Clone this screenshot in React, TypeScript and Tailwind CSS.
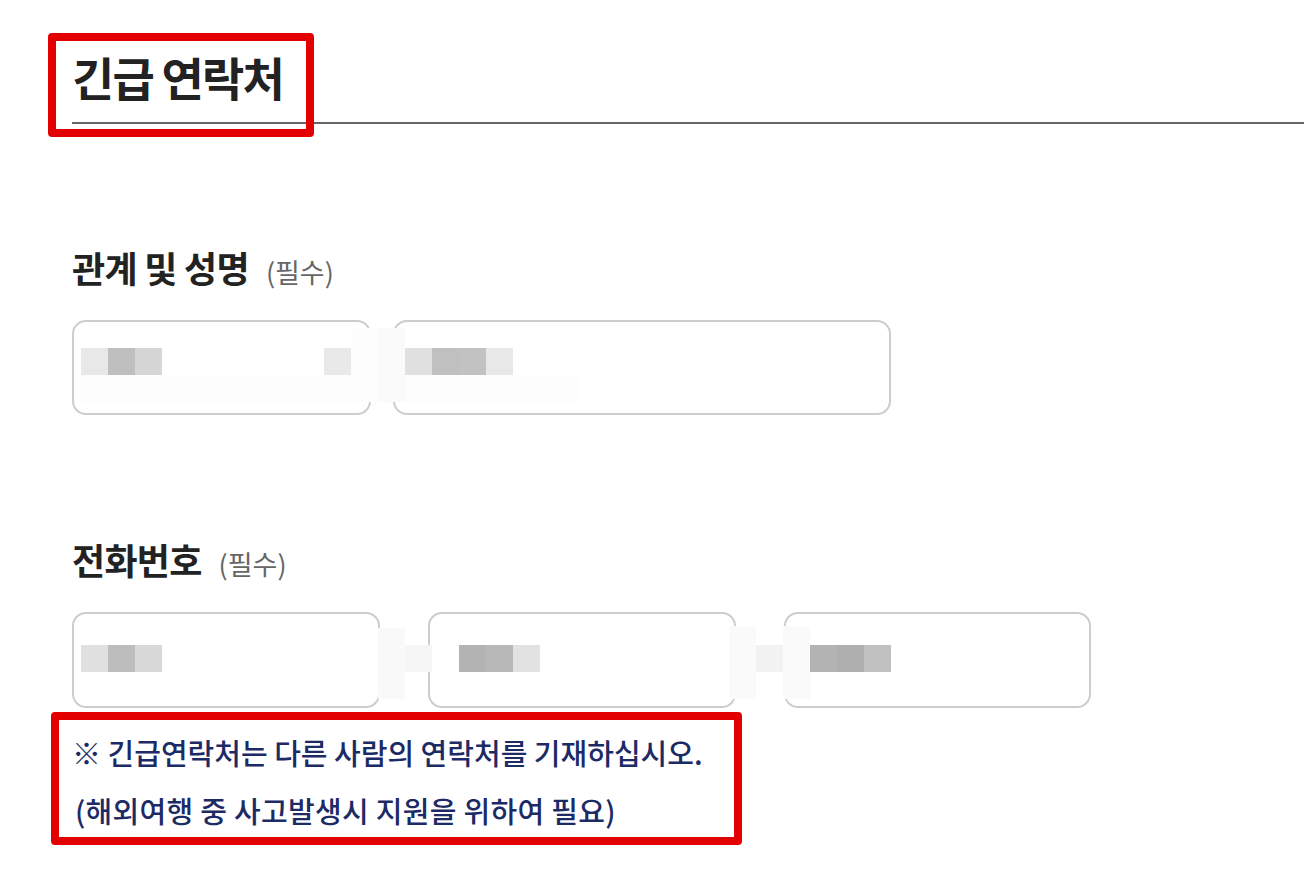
import React from "react";

type Cell = { x: number; y: number; w?: number; h?: number; c: string };

const cells: Cell[] = [
  // row 1 (relation / name)
  { x: 81, y: 375, w: 270, c: "#fdfdfd" },
  { x: 405, y: 375, w: 175, c: "#fdfdfd" },
  { x: 351, y: 328, h: 74, c: "#fdfdfd" },
  { x: 378, y: 328, h: 74, c: "#fafafa" },
  { x: 81, y: 348, c: "#e8e8e8" },
  { x: 108, y: 348, c: "#bfbfbf" },
  { x: 135, y: 348, c: "#d6d6d6" },
  { x: 324, y: 348, c: "#e9e9e9" },
  { x: 405, y: 348, c: "#e0e0e0" },
  { x: 432, y: 348, c: "#c0c0c0" },
  { x: 459, y: 348, c: "#c2c2c2" },
  { x: 486, y: 348, c: "#e8e8e8" },
  // row 2 (phone)
  { x: 81, y: 645, c: "#e0e0e0" },
  { x: 108, y: 645, c: "#bdbdbd" },
  { x: 135, y: 645, c: "#d8d8d8" },
  { x: 378, y: 628, h: 71, c: "#f9f9f9" },
  { x: 405, y: 645, c: "#f6f6f6" },
  { x: 459, y: 645, c: "#b3b3b3" },
  { x: 486, y: 645, c: "#b8b8b8" },
  { x: 513, y: 645, c: "#e2e2e2" },
  { x: 729, y: 626, h: 73, c: "#fafafa" },
  { x: 756, y: 645, c: "#f2f2f2" },
  { x: 783, y: 626, h: 73, c: "#fafafa" },
  { x: 810, y: 645, c: "#b3b3b3" },
  { x: 837, y: 645, c: "#afafaf" },
  { x: 864, y: 645, c: "#c0c0c0" },
];

export default function App() {
  return (
    <div className="relative h-[888px] w-[1304px] overflow-hidden bg-white font-['Noto_Sans_CJK_KR','Noto_Sans',sans-serif] text-[#222]">
      <div className="flex flex-col pl-[72px] pt-[50px]">
        <h2 className="border-b-2 border-[#666] pb-[20px] text-[46px] font-bold leading-[52px] tracking-[-0.04em]">
          긴급 연락처
        </h2>

        <div className="mt-[121px] flex h-[44px] items-baseline gap-[17px]">
          <span className="text-[36px] font-bold leading-[44px] tracking-[-0.02em]">관계 및 성명</span>
          <span className="text-[27px] leading-[44px] text-[#666]">(필수)</span>
        </div>
        <div className="mt-[31px] flex gap-[22px]">
          <div className="h-[95px] w-[299px] rounded-[14px] border-2 border-[#cdcdcd]" />
          <div className="h-[95px] w-[498px] rounded-[14px] border-2 border-[#cdcdcd]" />
        </div>

        <div className="mt-[122px] flex h-[44px] items-baseline gap-[17px]">
          <span className="text-[36px] font-bold leading-[44px] tracking-[-0.02em]">전화번호</span>
          <span className="text-[27px] leading-[44px] text-[#666]">(필수)</span>
        </div>
        <div className="mt-[31px] flex gap-[48px]">
          <div className="h-[96px] w-[308px] rounded-[14px] border-2 border-[#cdcdcd]" />
          <div className="h-[96px] w-[308px] rounded-[14px] border-2 border-[#cdcdcd]" />
          <div className="h-[96px] w-[307px] rounded-[14px] border-2 border-[#cdcdcd]" />
        </div>

        <div className="mt-[15px] flex flex-col text-[29px] font-medium leading-[58px] text-[#1c2a66]">
          <p>
            <span className="font-black">※</span> 긴급연락처는 다른 사람의 연락처를 기재하십시오.
          </p>
          <p className="pl-[3px] tracking-[0.01em]">(해외여행 중 사고발생시 지원을 위하여 필요)</p>
        </div>
      </div>

      {cells.map((c, i) => (
        <div
          key={i}
          className="absolute"
          style={{ left: c.x, top: c.y, width: c.w ?? 27, height: c.h ?? 27, background: c.c }}
        />
      ))}

      <div className="absolute left-[48px] top-[33px] h-[104px] w-[266px] rounded-[4px] border-[8px] border-[#e30000]" />
      <div className="absolute left-[51px] top-[712px] h-[133px] w-[691px] rounded-[4px] border-[8px] border-[#e30000]" />
    </div>
  );
}
